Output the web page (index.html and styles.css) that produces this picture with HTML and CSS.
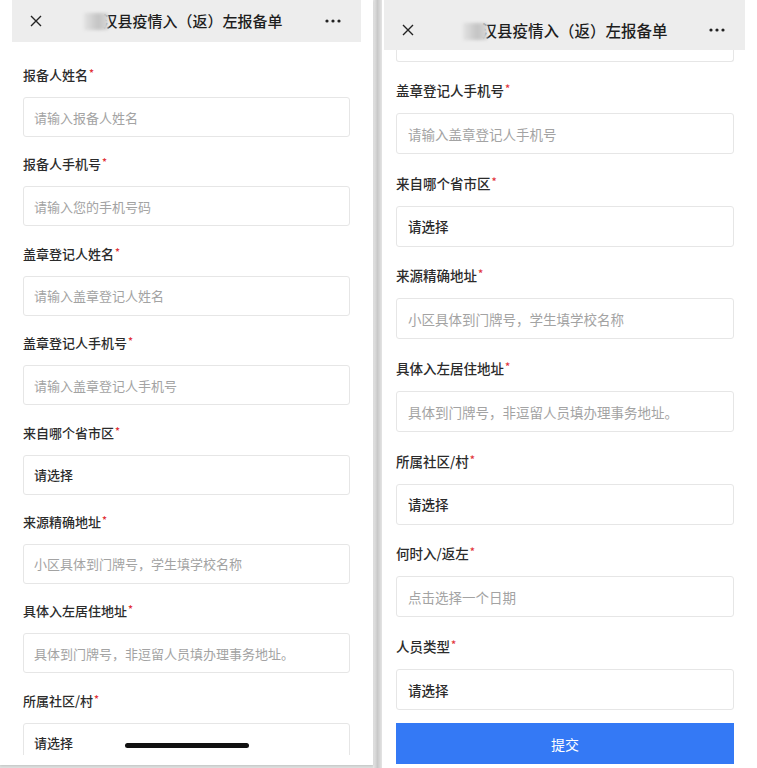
FILE: index.html
```html
<!DOCTYPE html>
<html lang="zh-CN">
<head>
  <meta charset="UTF-8">
  <title>疫情入（返）左报备单</title>
  <link rel="stylesheet" href="styles.css">
</head>
<body>
  <!-- 左侧截图 -->
  <div class="phone phone-left">
    <div class="topbar">
      <svg class="close" width="12" height="12" viewBox="0 0 12 12"><path d="M1 1L11 11M11 1L1 11" stroke="#222" stroke-width="1.4" fill="none"/></svg>
      <div class="title"><span class="blur"></span>汉县疫情入（返）左报备单</div>
      <svg class="more" width="16" height="4" viewBox="0 0 16 4"><circle cx="2" cy="2" r="1.6" fill="#222"/><circle cx="8" cy="2" r="1.6" fill="#222"/><circle cx="14" cy="2" r="1.6" fill="#222"/></svg>
    </div>
    <div class="form">
      <div class="field"><div class="label">报备人姓名<i>*</i></div><div class="box">请输入报备人姓名</div></div>
      <div class="field"><div class="label">报备人手机号<i>*</i></div><div class="box">请输入您的手机号码</div></div>
      <div class="field"><div class="label">盖章登记人姓名<i>*</i></div><div class="box">请输入盖章登记人姓名</div></div>
      <div class="field"><div class="label">盖章登记人手机号<i>*</i></div><div class="box">请输入盖章登记人手机号</div></div>
      <div class="field"><div class="label">来自哪个省市区<i>*</i></div><div class="box select">请选择</div></div>
      <div class="field"><div class="label">来源精确地址<i>*</i></div><div class="box">小区具体到门牌号，学生填学校名称</div></div>
      <div class="field"><div class="label">具体入左居住地址<i>*</i></div><div class="box">具体到门牌号，非逗留人员填办理事务地址。</div></div>
      <div class="field"><div class="label">所属社区/村<i>*</i></div><div class="box select">请选择</div></div>
    </div>
    <div class="home-bar"></div>
  </div>

  <div class="divider"></div>

  <!-- 右侧截图 -->
  <div class="phone phone-right">
    <div class="topbar">
      <svg class="close" width="12" height="12" viewBox="0 0 12 12"><path d="M1 1L11 11M11 1L1 11" stroke="#222" stroke-width="1.4" fill="none"/></svg>
      <div class="title"><span class="blur"></span>汉县疫情入（返）左报备单</div>
      <svg class="more" width="16" height="4" viewBox="0 0 16 4"><circle cx="2" cy="2" r="1.6" fill="#222"/><circle cx="8" cy="2" r="1.6" fill="#222"/><circle cx="14" cy="2" r="1.6" fill="#222"/></svg>
    </div>
    <div class="form">
      <div class="box-tail"></div>
      <div class="field"><div class="label">盖章登记人手机号<i>*</i></div><div class="box">请输入盖章登记人手机号</div></div>
      <div class="field"><div class="label">来自哪个省市区<i>*</i></div><div class="box select">请选择</div></div>
      <div class="field"><div class="label">来源精确地址<i>*</i></div><div class="box">小区具体到门牌号，学生填学校名称</div></div>
      <div class="field"><div class="label">具体入左居住地址<i>*</i></div><div class="box">具体到门牌号，非逗留人员填办理事务地址。</div></div>
      <div class="field"><div class="label">所属社区/村<i>*</i></div><div class="box select">请选择</div></div>
      <div class="field"><div class="label">何时入/返左<i>*</i></div><div class="box">点击选择一个日期</div></div>
      <div class="field field-last"><div class="label">人员类型<i>*</i></div><div class="box select">请选择</div></div>
      <div class="submit">提交</div>
    </div>
  </div>
</body>
</html>
```

FILE: styles.css
```css
body {
  margin: 0;
  width: 757px;
  height: 768px;
  display: flex;
  background: #dde0df;
  font-family: "Noto Sans CJK SC", "Liberation Sans", sans-serif;
  color: #333;
  overflow: hidden;
}
.phone {
  background: #fff;
  display: flex;
  flex-direction: column;
  position: relative;
}
.phone-left {
  width: 373px;
  height: 765px;
  box-shadow: 0 1px 2px rgba(0, 0, 0, 0.12);
}
.phone-right {
  flex: 1;
  height: 768px;
}
.divider {
  width: 9px;
  height: 768px;
  background: linear-gradient(to right, #e9e9e9, #c9c9c9 50%, #e4e4e4);
}

/* 顶部栏 */
.topbar {
  display: flex;
  align-items: center;
  justify-content: space-between;
  background: #ededed;
  box-sizing: border-box;
  flex-shrink: 0;
}
.phone-left .topbar {
  height: 42px;
  margin: 0 12px;
  padding: 0 20px 0 18px;
}
.phone-right .topbar {
  height: 50px;
  margin: 0 12px 0 2px;
  padding: 9px 20px 0 18px;
}
.title {
  font-size: 15px;
  font-weight: 500;
  color: #1e1e1e;
  white-space: nowrap;
  line-height: 20px;
}
.phone-right .title {
  font-size: 15.5px;
  margin-left: 8px;
}
.blur {
  display: inline-block;
  position: relative;
  width: 24px;
  height: 17px;
  margin-right: -6px;
  vertical-align: -3px;
  background: linear-gradient(to right, #e2e2e2, #c4c4c4 60%, #d6d6d6);
  filter: blur(1.5px);
}

/* 表单 */
.form {
  overflow: hidden;
}
.phone-left .form {
  padding: 23px 23px 0 23px;
  height: 690px;
}
.phone-right .form {
  padding: 0 23px 0 14px;
}
.field {
  display: flex;
  flex-direction: column;
  flex-shrink: 0;
}
.label {
  font-weight: 500;
  color: #2b2b2b;
  overflow: hidden;
}
.label i {
  font-style: normal;
  color: #e2343b;
  font-size: 0.8em;
  margin-left: 1px;
  line-height: 0;
  position: relative;
  top: -3px;
}
.box {
  box-sizing: border-box;
  border: 1px solid #e6e6e6;
  border-radius: 3px;
  color: #a3a3a3;
  display: flex;
  align-items: center;
  white-space: nowrap;
  flex-shrink: 0;
}
.box.select {
  color: #2b2b2b;
  font-weight: 500;
}
.phone-left .field {
  margin-bottom: 17.4px;
  font-size: 13px;
}
.phone-left .label {
  height: 20px;
  line-height: 20px;
  margin-bottom: 12px;
}
.phone-left .box {
  height: 40px;
  padding-left: 10px;
}
.phone-right .field {
  margin-bottom: 18.7px;
  font-size: 13.5px;
}
.phone-right .field-last {
  margin-bottom: 13px;
}
.phone-right .label {
  height: 21px;
  line-height: 21px;
  margin-bottom: 12px;
}
.phone-right .box {
  height: 41px;
  padding-left: 11px;
}
.box-tail {
  height: 12px;
  box-sizing: border-box;
  border: 1px solid #e6e6e6;
  border-top: none;
  border-radius: 0 0 3px 3px;
  margin-bottom: 18px;
}
.submit {
  height: 41px;
  background: #3479f5;
  color: #fff;
  font-size: 14px;
  display: flex;
  align-items: center;
  justify-content: center;
}

.home-bar {
  position: absolute;
  left: 125px;
  top: 743px;
  width: 124px;
  height: 5px;
  border-radius: 3px;
  background: #111;
}
```
